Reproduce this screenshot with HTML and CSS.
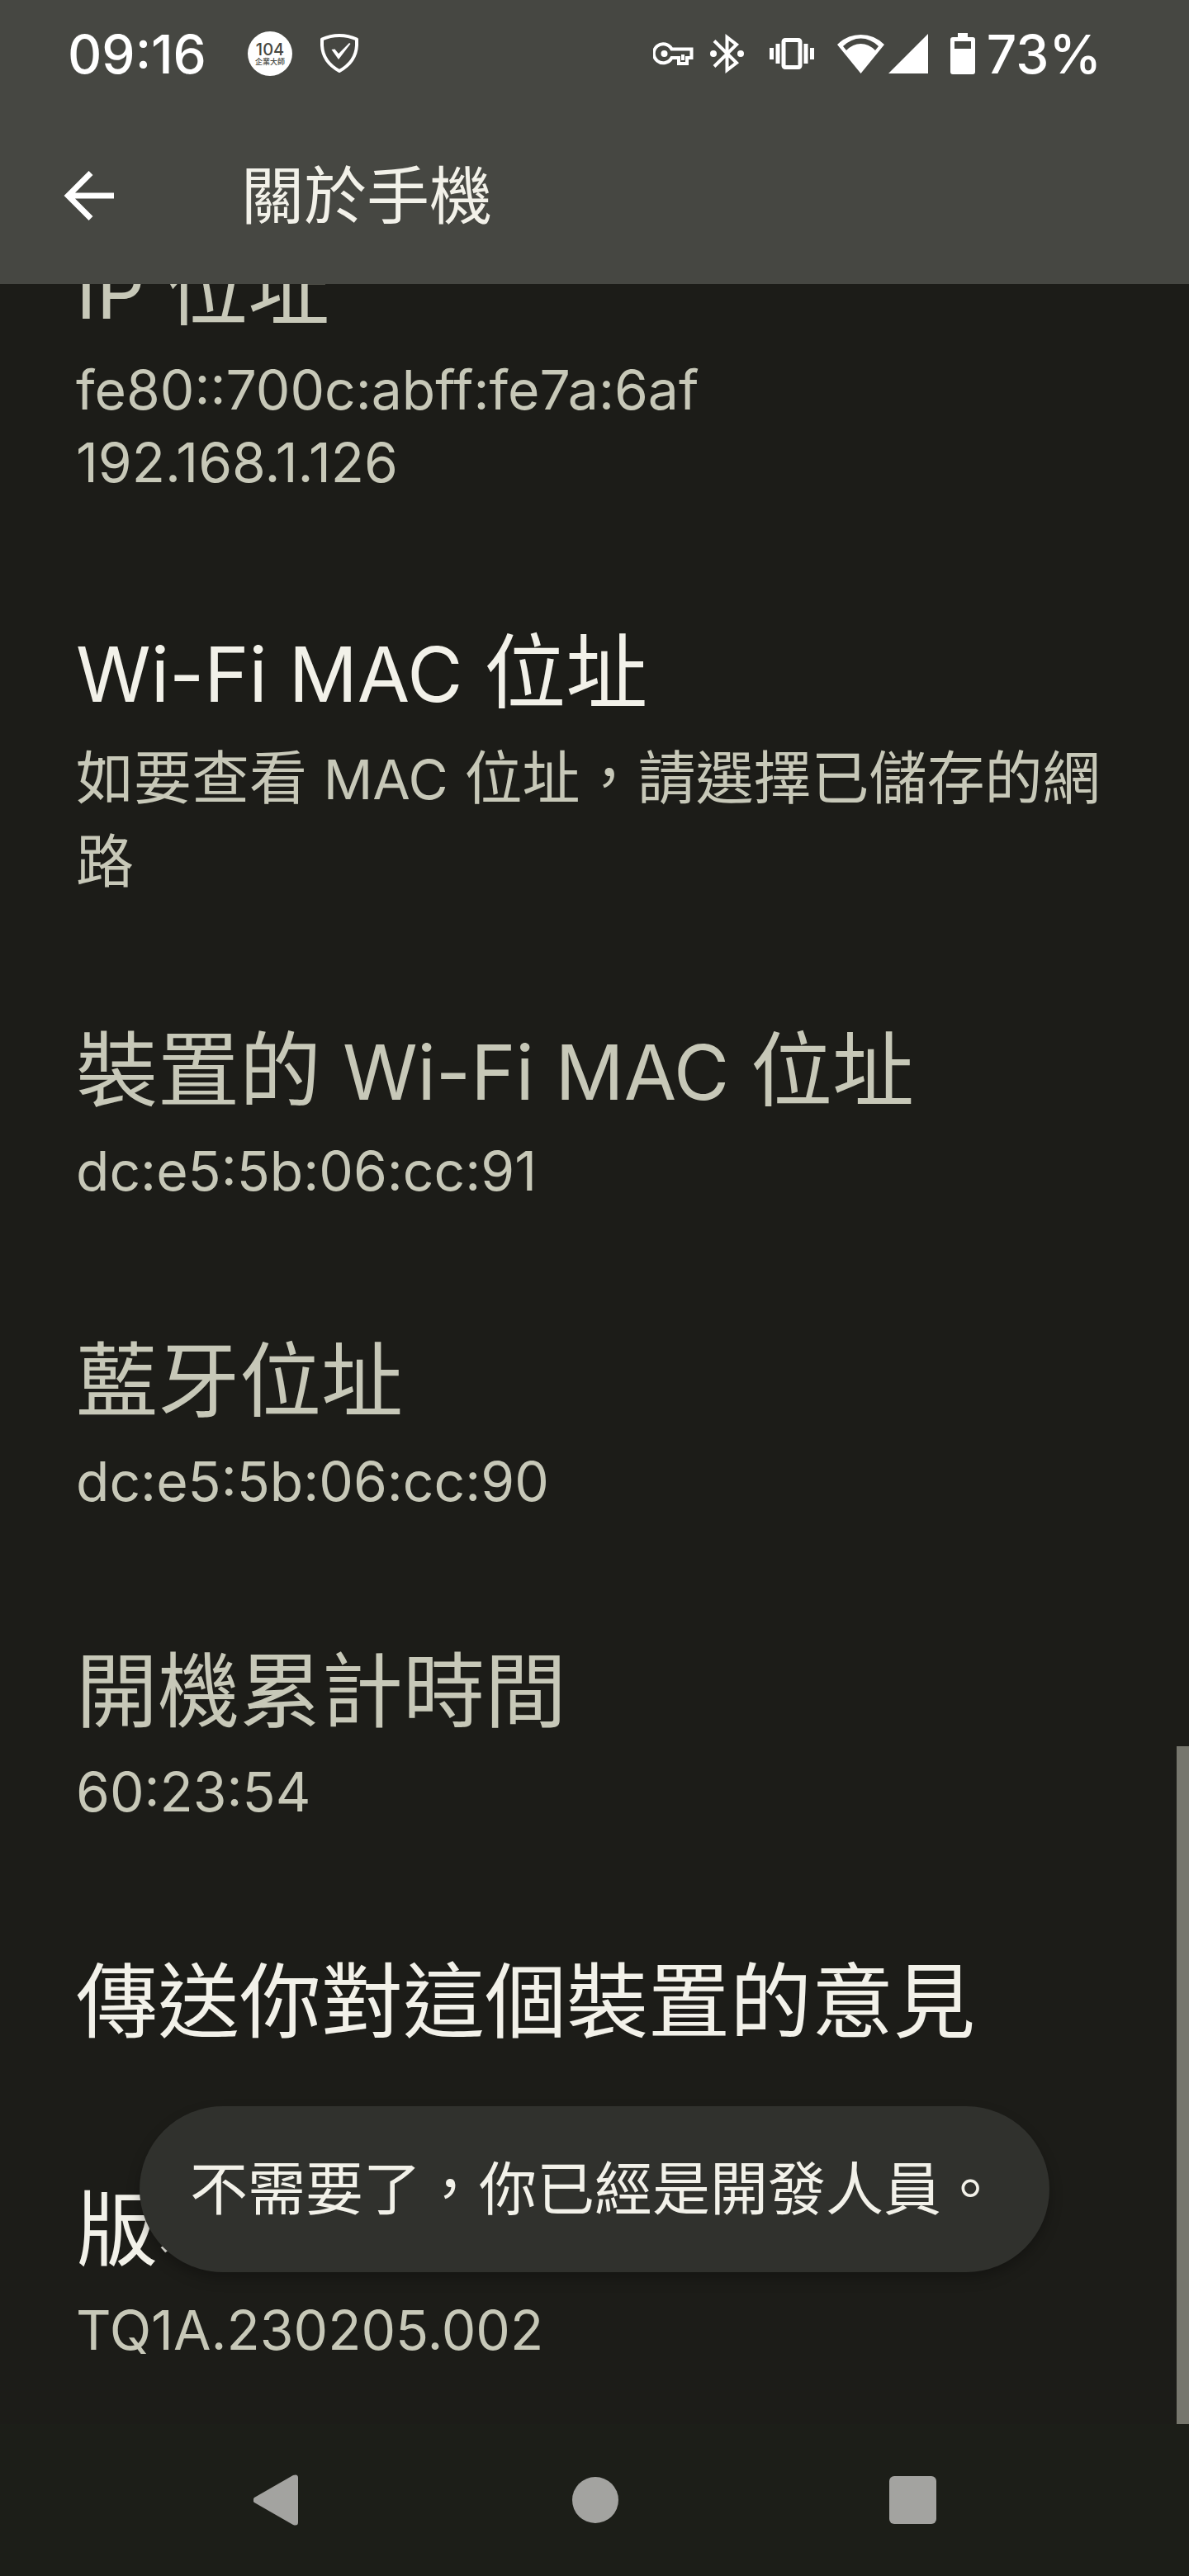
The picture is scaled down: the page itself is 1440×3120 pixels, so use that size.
FILE: index.html
```html
<!DOCTYPE html>
<html lang="zh-Hant-TW">
<head>
<meta charset="utf-8">
<meta name="viewport" content="width=device-width, initial-scale=1">
<title>關於手機</title>
<link rel="stylesheet" href="styles.css">
</head>
<body>
<div class="screen">
  <header class="top">
    <div class="status">
      <div class="status-side">
        <time class="clock">09:16</time>
        <svg class="icon-104" width="54" height="54" viewBox="0 0 54 54" role="img" aria-label="104 企業大師">
          <circle cx="27" cy="27" r="27" fill="#fff"/>
          <text class="logo-number" x="27" y="29">104</text>
          <text class="logo-name" x="27" y="40">企業大師</text>
        </svg>
        <svg width="46" height="48" viewBox="0 0 46 48" fill="none" stroke="#fff" aria-hidden="true">
          <path d="M2 6.500Q12 2 23 2T44 6.500V14Q43 34 23 45Q3 34 2 14Z" stroke-width="4" stroke-linejoin="round"/>
          <path d="M13.500 19L17.500 18.500L22 24L35 11L36.500 12L22 31Z" fill="#fff" stroke="none"/>
        </svg>
      </div>
      <div class="status-side">
        <svg class="icon-key" width="49" height="28" viewBox="0 0 49 28" fill="none" aria-hidden="true">
          <path d="M22.500 8.500H46.500V19H41V26H31V19H22.500A11.500 11.500 0 1 1 22.500 8.500Z" stroke="#fff" stroke-width="4"/>
          <path d="M36 15V22" stroke="#fff" stroke-width="4"/>
          <circle cx="13.500" cy="14" r="4" fill="#fff"/>
        </svg>
        <svg class="icon-bluetooth" width="41" height="50" viewBox="0 0 41 50" fill="none" stroke="#fff" stroke-width="4" aria-hidden="true">
          <path d="M5 9.500L32 36L20.500 45V5L32 14L5 40.500"/>
          <circle cx="4" cy="25" r="4" fill="#fff" stroke="none"/>
          <circle cx="37" cy="25" r="4" fill="#fff" stroke="none"/>
        </svg>
        <svg class="icon-vibrate" width="54" height="40" viewBox="0 0 54 40" fill="none" stroke="#fff" stroke-width="5" aria-hidden="true">
          <rect x="17" y="3.500" width="20" height="33" rx="2"/>
          <path d="M10 8V32M44 8V32M2.500 13V27M51.500 13V27"/>
        </svg>
        <svg class="icon-wifi" width="57" height="48" viewBox="0 0 57 48" aria-hidden="true">
          <path d="M0 13Q12 1 28.500 1T57 13L28.500 48ZM7 15L11 20Q19 12 28.500 12T46 20L50 15Q40 5.500 28.500 5.500T7 15Z" fill="#fff" fill-rule="evenodd"/>
        </svg>
        <svg class="icon-signal" width="48" height="48" viewBox="0 0 48 48" aria-hidden="true">
          <path d="M48 0V48H0Z" fill="#fff"/>
        </svg>
        <svg class="icon-battery" width="30" height="50" viewBox="0 0 30 50" aria-hidden="true">
          <path d="M9 0H21V5H27Q30 5 30 8V47Q30 50 27 50H3Q0 50 0 47V8Q0 5 3 5H9ZM5 10V19H25V10Z" fill="#fff" fill-rule="evenodd"/>
        </svg>
        <span class="battery-level">73%</span>
      </div>
    </div>
    <div class="app-bar">
      <button class="back" type="button" aria-label="返回">
        <svg width="61" height="62" viewBox="0 0 61 62" fill="none" stroke="#fff" stroke-width="7" aria-hidden="true">
          <path d="M33 3.500L5.500 31L33 58.500M5.500 31H61"/>
        </svg>
      </button>
      <h1 class="page-title">關於手機</h1>
    </div>
  </header>

  <main class="content">
    <div class="list">
      <section class="row">
        <h2 class="row-title"><span class="latin">IP </span>位址</h2>
        <p class="summary">fe80::700c:abff:fe7a:6af<br>192.168.1.126</p>
      </section>
      <button class="row row-action" type="button">
        <span class="row-title"><span class="latin">Wi-Fi MAC </span>位址</span>
        <span class="summary summary-cjk">如要查看 <span class="latin">MAC</span> 位址，請選擇已儲存的網路</span>
      </button>
      <section class="row">
        <h2 class="row-title">裝置的<span class="latin"> Wi-Fi MAC </span>位址</h2>
        <p class="summary">dc:e5:5b:06:cc:91</p>
      </section>
      <section class="row">
        <h2 class="row-title">藍牙位址</h2>
        <p class="summary">dc:e5:5b:06:cc:90</p>
      </section>
      <section class="row">
        <h2 class="row-title">開機累計時間</h2>
        <p class="summary">60:23:54</p>
      </section>
      <button class="row row-action" type="button">
        <span class="row-title">傳送你對這個裝置的意見</span>
      </button>
      <button class="row row-action" type="button">
        <span class="row-title">版本號碼</span>
        <span class="summary">TQ1A.230205.002</span>
      </button>
    </div>
    <div class="scroll-thumb"></div>
    <div class="toast" role="status">不需要了，你已經是開發人員。</div>
  </main>

  <nav class="nav-bar">
    <button class="nav-key" type="button" aria-label="上一頁">
      <svg width="57" height="62" viewBox="0 0 57 62" aria-hidden="true"><path d="M1 28L48 1Q54 -1 54 4V58Q54 63 48 61L1 34Q-2 31 1 28Z" fill="#a3a3a0"/></svg>
    </button>
    <button class="nav-key" type="button" aria-label="主畫面">
      <svg width="57" height="56" viewBox="0 0 57 56" aria-hidden="true"><circle cx="29" cy="28" r="28" fill="#a3a3a0"/></svg>
    </button>
    <button class="nav-key" type="button" aria-label="最近使用">
      <svg width="57" height="58" viewBox="0 0 57 58" aria-hidden="true"><rect width="57" height="58" rx="6" fill="#a3a3a0"/></svg>
    </button>
  </nav>
</div>
</body>
</html>
```
FILE: styles.css
```css
:root {
  --surface: #1c1c18;
  --bar: #464742;
  --text: #f2f1e9;
  --muted: #c7c8b8;
}

* {
  box-sizing: border-box;
}

body {
  margin: 0;
  background: var(--surface);
  color: var(--text);
  font-family: "Inter", "Noto Sans CJK TC", sans-serif;
}

button {
  margin: 0;
  padding: 0;
  border: 0;
  background: none;
  color: inherit;
  font: inherit;
  text-align: left;
}

svg {
  display: block;
  flex: none;
}

.screen {
  display: flex;
  flex-direction: column;
  height: 100vh;
}

/* Status bar and app bar */
.top {
  background: var(--bar);
}

.status {
  display: flex;
  justify-content: space-between;
  height: 130px;
  padding: 0 106px 0 82px;
  color: #fff;
  font-size: 64px;
  font-weight: 500;
}

.status-side {
  display: flex;
  align-items: center;
}

.icon-104 {
  margin: 0 34px 0 50px;
}

.logo-number,
.logo-name {
  fill: var(--bar);
  text-anchor: middle;
}

.logo-number {
  font-size: 20px;
  font-weight: 500;
}

.logo-name {
  font-size: 9px;
}

.icon-key {
  margin-right: 20px;
}

.icon-bluetooth {
  margin-right: 31px;
}

.icon-vibrate {
  margin-right: 28px;
}

.icon-wifi {
  margin-right: 5px;
}

.icon-signal {
  margin-right: 27px;
}

.icon-battery {
  margin-right: 14px;
}

.app-bar {
  display: flex;
  align-items: center;
  gap: 154px;
  height: 214px;
  padding: 0 77px;
}

.page-title {
  margin: 0;
  font-size: 76px;
  font-weight: 400;
  line-height: 110px;
}

/* Settings list, scrolled to its end */
.content {
  position: relative;
  display: flex;
  flex: 1;
  flex-direction: column;
  justify-content: flex-end;
  min-height: 0;
  overflow: hidden;
}

.list {
  display: flex;
  flex-direction: column;
  margin-bottom: -8px;
}

.row {
  display: block;
  width: 100%;
  padding: 60px 92px 66px;
  color: var(--muted);
}

.row-title {
  display: block;
  margin: 0 0 6px;
  font-size: 99px;
  font-weight: 400;
  line-height: 144px;
}

.row-title .latin {
  font-size: 92px;
  line-height: 1;
}

.row-action .row-title {
  color: var(--text);
}

.summary {
  display: block;
  margin: 0;
  padding-bottom: 12px;
  font-size: 66px;
  line-height: 88px;
}

.summary-cjk {
  padding-bottom: 4px;
  font-size: 70px;
  line-height: 101px;
}

.summary-cjk .latin {
  font-size: 66px;
  line-height: 1;
}

.scroll-thumb {
  position: absolute;
  right: 0;
  bottom: 0;
  width: 15px;
  height: 821px;
  background: #76766d;
}

.toast {
  position: absolute;
  bottom: 184px;
  left: 50%;
  padding: 50px 61px;
  border-radius: 101px;
  background: #30312d;
  box-shadow: 0 8px 16px rgba(0, 0, 0, 0.25);
  font-size: 70px;
  line-height: 101px;
  white-space: nowrap;
  transform: translateX(-50%);
}

/* System navigation */
.nav-bar {
  display: flex;
  align-items: center;
  justify-content: center;
  gap: 328px;
  height: 184px;
  background: #1c1e18;
}
```
